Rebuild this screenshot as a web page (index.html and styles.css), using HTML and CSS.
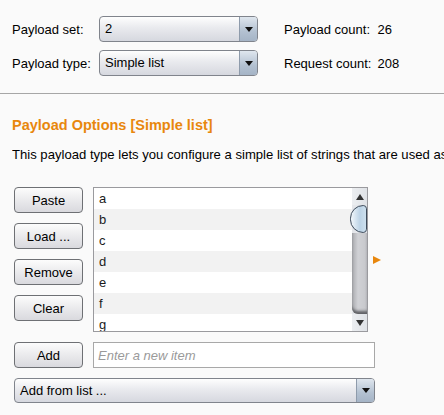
FILE: index.html
```html
<!DOCTYPE html>
<html>
<head>
<meta charset="utf-8">
<link rel="stylesheet" href="styles.css">
</head>
<body>
<div class="top">
  <div class="fields">
    <span class="lbl">Payload set:</span>
    <div class="combo set"><span class="val">2</span><span class="arr"><i></i></span></div>
    <span class="lbl">Payload type:</span>
    <div class="combo set"><span class="val">Simple list</span><span class="arr"><i></i></span></div>
  </div>
  <div class="counts">
    <span>Payload count:</span><span>26</span>
    <span>Request count:</span><span>208</span>
  </div>
</div>
<div class="sep"></div>
<section class="options">
  <h2 class="title">Payload Options [Simple list]</h2>
  <p class="desc">This payload type lets you configure a simple list of strings that are used as payloads.</p>
  <div class="editor">
    <div class="buttons">
      <button class="btn">Paste</button>
      <button class="btn">Load ...</button>
      <button class="btn">Remove</button>
      <button class="btn">Clear</button>
    </div>
    <div class="list">
      <div class="items">
        <div class="row">a</div>
        <div class="row alt">b</div>
        <div class="row">c</div>
        <div class="row alt">d</div>
        <div class="row">e</div>
        <div class="row alt">f</div>
        <div class="row">g</div>
      </div>
      <div class="sbar">
        <div class="sb-btn"><i class="up"></i></div>
        <div class="thumb"></div>
        <div class="track"></div>
        <div class="sb-btn"><i class="down"></i></div>
      </div>
    </div>
    <div class="marker"></div>
  </div>
  <div class="addrow">
    <button class="btn">Add</button>
    <input class="entry" type="text" placeholder="Enter a new item">
  </div>
  <div class="combo wide"><span class="val">Add from list ...</span><span class="arr"><i></i></span></div>
</section>
</body>
</html>
```
FILE: styles.css
```css
html, body {
  margin: 0;
  padding: 0;
  background: #fafafa;
}
body {
  font-family: "Liberation Sans", Arial, sans-serif;
  font-size: 13px;
  color: #000;
  width: 444px;
  height: 415px;
  overflow: hidden;
}
.top {
  display: flex;
  padding: 16px 0 0 12px;
}
.fields {
  display: grid;
  grid-template-columns: 87px 159px;
  row-gap: 8px;
  align-items: center;
}
.counts {
  display: grid;
  grid-template-columns: auto auto;
  column-gap: 6px;
  row-gap: 8px;
  margin-left: 26px;
  grid-auto-rows: 26px;
  align-items: center;
  align-content: start;
}
.combo {
  display: flex;
  box-sizing: border-box;
  height: 26px;
  border: 1px solid #80848c;
  border-radius: 4px;
  background: linear-gradient(#fefefe, #e9eaee 45%, #d6d8df);
  overflow: hidden;
}
.combo .val {
  flex: 1;
  padding-left: 5px;
  line-height: 24px;
  white-space: nowrap;
}
.combo .arr {
  width: 17px;
  border-left: 1px solid #8e9bab;
  background: linear-gradient(#dfe6ee, #b3c1d1 60%, #a5b4c6);
  display: flex;
  align-items: center;
  justify-content: center;
}
.combo .arr i {
  width: 0;
  height: 0;
  border-left: 4px solid transparent;
  border-right: 4px solid transparent;
  border-top: 5px solid #111;
}
.sep {
  margin-top: 17px;
  height: 1px;
  background: #a6a6a6;
}
.options {
  padding: 0 0 0 12px;
}
.title {
  margin: 23px 0 0;
  font-size: 14.5px;
  line-height: 16px;
  font-weight: bold;
  color: #e8870d;
}
.desc {
  margin: 14px 0 0;
  line-height: 16px;
  font-size: 13.1px;
  white-space: nowrap;
  overflow: hidden;
}
.editor {
  display: flex;
  align-items: center;
  margin-top: 24px;
  height: 145px;
}
.buttons {
  align-self: flex-start;
  display: flex;
  flex-direction: column;
  gap: 10px;
  padding-left: 2px;
}
.btn {
  box-sizing: border-box;
  width: 69px;
  height: 26px;
  margin: 0;
  padding: 0;
  border: 1px solid #6e7074;
  border-radius: 4px;
  background: linear-gradient(#fcfcfc, #ececee 45%, #d9d9de);
  font-family: "Liberation Sans", Arial, sans-serif;
  font-size: 13px;
  color: #000;
}
.list {
  box-sizing: border-box;
  display: flex;
  width: 275px;
  height: 145px;
  margin-left: 10px;
  border: 1px solid #9a9a9e;
  background: #fff;
  overflow: hidden;
}
.items {
  flex: 1;
  overflow: hidden;
}
.row {
  height: 21px;
  line-height: 21px;
  padding-left: 5px;
  color: #1b1b1b;
}
.row.alt {
  background: #f2f2f2;
}
.sbar {
  width: 15px;
  display: flex;
  flex-direction: column;
  background: #e4e6ea;
}
.sb-btn {
  height: 17px;
  display: flex;
  align-items: center;
  justify-content: center;
  background: linear-gradient(90deg, #eceef1, #dfe2e6);
}
.sb-btn i {
  width: 0;
  height: 0;
  border-left: 4px solid transparent;
  border-right: 4px solid transparent;
}
.sb-btn i.up {
  border-bottom: 6px solid #333;
}
.sb-btn i.down {
  border-top: 6px solid #333;
}
.thumb {
  height: 28px;
  box-sizing: border-box;
  border: 1px solid #3c4a5a;
  border-radius: 14px 4px 4px 14px;
  margin-left: -2px;
  background: linear-gradient(90deg, #f2f7fb, #bcd3e6 60%, #cde0ee);
}
.track {
  flex: 1;
  background: linear-gradient(90deg, #a9aaae, #d0d1d5 40%, #c6c7cb);
  border-bottom-left-radius: 6px;
  box-shadow: inset 0 -4px 3px -1px #5f6064;
}
.marker {
  width: 0;
  height: 0;
  margin-left: 5px;
  border-top: 4px solid transparent;
  border-bottom: 4px solid transparent;
  border-left: 8px solid #e8870d;
}
.addrow {
  display: flex;
  gap: 10px;
  margin-top: 10px;
  padding-left: 2px;
}
.entry {
  box-sizing: border-box;
  width: 282px;
  height: 26px;
  margin: 0;
  padding: 0 4px;
  border: 1px solid #a8a8a8;
  background: #fff;
  font-family: "Liberation Sans", Arial, sans-serif;
  font-size: 13px;
}
.entry::placeholder {
  color: #9a9a9a;
  font-style: italic;
}
.combo.wide {
  width: 361px;
  height: 25px;
  margin: 10px 0 0 2px;
}
.combo.wide .val {
  line-height: 23px;
}
```
